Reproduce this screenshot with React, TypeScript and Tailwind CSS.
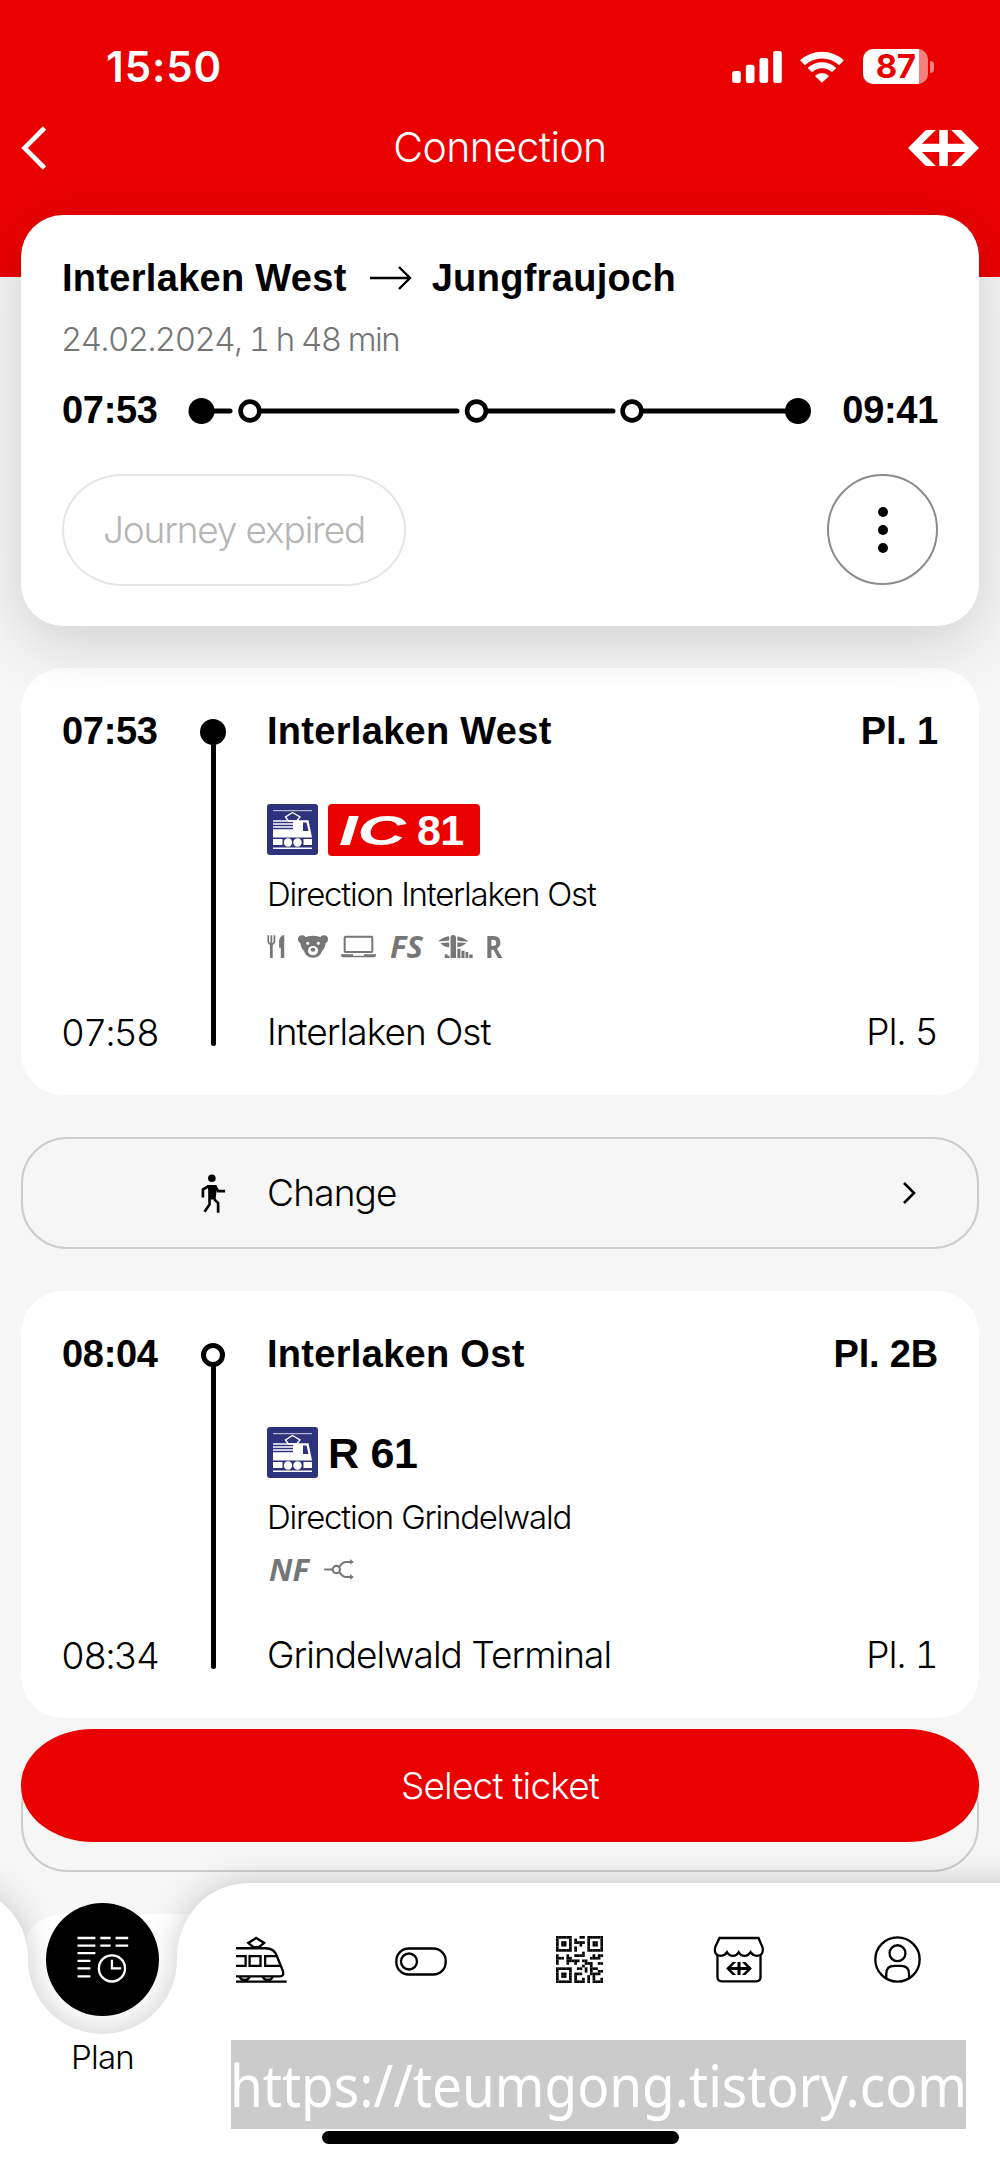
import type { ReactNode } from "react";

const light = "font-['Inter',sans-serif] font-light";
const bold = "font-['Liberation_Sans',Arial,sans-serif] font-bold";

const qrRows = [
  "######...##.######",
  "#....#.#....#....#",
  "#.##.#.####.#.##.#",
  "#.##.#...#..#.##.#",
  "#....#.#....#....#",
  "######.#....######",
  "..........#.......",
  "#...#..####...#.##",
  "###.##.......####.",
  "#...#####.##......",
  "#...#..#...###..##",
  "..........#..#....",
  "######..##.#.###..",
  "#....#.....#.#..##",
  "#.##.#.###...####.",
  "#.##.#.#....#.#...",
  "#....#.#..#.#.#..#",
  "######.####.#.####",
];

function SbbLogo({ className }: { className?: string }) {
  return (
    <svg viewBox="0 0 214 108" className={className} fill="currentColor">
      <path d="M0 54 54 0H84L42 41H172L130 0H160L214 54 160 108H130L172 66H42L84 108H54Z" />
      <path d="M94 0H120V108H94Z" />
    </svg>
  );
}

function StatusBar() {
  return (
    <div className="flex h-[100px] items-end justify-between pr-[66px] pl-[106px] text-white">
      <span className="mb-[8px] font-['Inter',sans-serif] text-[42px] leading-[50px] font-semibold tracking-[0.9px]">
        15:50
      </span>
      <div className="mb-[16px] flex items-center">
        <svg viewBox="35 60 149 96" className="h-[32px] w-[50px]" fill="currentColor">
          <rect x="35" y="120" width="26" height="36" rx="7" />
          <rect x="76" y="101" width="26" height="55" rx="7" />
          <rect x="117" y="81" width="26" height="75" rx="7" />
          <rect x="158" y="60" width="26" height="96" rx="7" />
        </svg>
        <svg viewBox="240 59 130 98" className="ml-[18px] h-[33px] w-[44px]" fill="none" stroke="currentColor">
          <path d="M247 97A85 85 0 0 1 363 97" strokeWidth="20" />
          <path d="M269 119A51 51 0 0 1 341 119" strokeWidth="18" />
          <path d="M305 156 284 136A30 30 0 0 1 326 136Z" fill="currentColor" stroke="none" />
        </svg>
        <div className="ml-[19px] flex h-[35px] w-[65px] items-center justify-center rounded-[10px] bg-linear-to-r from-white from-86% to-[#f58080] to-86%">
          <span className="font-['Inter',sans-serif] text-[33px] leading-[35px] font-bold tracking-[-0.5px] text-[#eb0000]">
            87
          </span>
        </div>
        <div className="ml-[2px] h-[12px] w-[4px] rounded-r-full bg-[#f58080]" />
      </div>
    </div>
  );
}

function Header() {
  return (
    <header className="h-[277px] bg-[#eb0000]">
      <StatusBar />
      <div className="flex h-[95px] items-center justify-between px-[21px] text-white">
        <svg viewBox="0 0 26 44" className="h-[44px] w-[71px]" preserveAspectRatio="xMinYMid" fill="none" stroke="currentColor" strokeWidth="4.6">
          <path d="M23.5 2 3.5 22 23.5 42" />
        </svg>
        <h1 className={`${light} mb-[2px] text-[41px] leading-[50px] tracking-[-0.6px]`}>Connection</h1>
        <SbbLogo className="h-[36px] w-[71px]" />
      </div>
    </header>
  );
}

function RouteBar() {
  return (
    <svg viewBox="188 397 624 28" className="mt-[2px] h-[28px] w-[624px]" fill="none" stroke="black" strokeWidth="5" strokeLinecap="round">
      <path d="M214 411H230M262 411H457M488 411H613M644 411H790" />
      <g fill="black" stroke="none">
        <circle cx="201.5" cy="411" r="13" />
        <circle cx="798" cy="411" r="13" />
      </g>
      <g strokeWidth="4.6">
        <circle cx="250" cy="411" r="9.4" />
        <circle cx="476.5" cy="411" r="9.4" />
        <circle cx="632" cy="411" r="9.4" />
      </g>
    </svg>
  );
}

function SummaryCard() {
  return (
    <section className="relative z-10 -mt-[62px] h-[411px] rounded-[42px] bg-white px-[41px] pt-[41px] shadow-[0_14px_64px_rgba(0,0,0,0.17)]">
      <div className={`${bold} flex h-[44px] items-center text-[38px] leading-[44px] tracking-[0.3px]`}>
        <span>Interlaken West</span>
        <svg viewBox="0 0 42 26" className="mr-[20px] ml-[23px] h-[26px] w-[42px]" fill="none" stroke="black" strokeWidth="2.4">
          <path d="M0 13H40M29 2 40 13 29 24" />
        </svg>
        <span>Jungfraujoch</span>
      </div>
      <p className={`${light} -ml-[1px] mt-[19px] text-[33px] leading-[40px] tracking-[-1.55px] text-[#757575] tabular-nums`}>
        24.02.2024, 1 h 48 min
      </p>
      <div className={`${bold} mt-[29px] flex h-[44px] items-center justify-between text-[38px] leading-[44px] tracking-[-0.3px]`}>
        <span className="w-[96px]">07:53</span>
        <RouteBar />
        <span className="w-[96px] text-right">09:41</span>
      </div>
      <div className="mt-[42px] flex justify-between">
        <button className={`${light} h-[112px] w-[344px] rounded-[60px/56px] border-2 border-[#e5e5e5] text-[37px] tracking-[-1.15px] text-[#b5b5b5]`}>
          Journey expired
        </button>
        <button className="flex size-[111px] flex-col items-center justify-center gap-[8px] rounded-full border-2 border-[#8c8c8c]">
          <span className="size-[10px] rounded-full bg-black" />
          <span className="size-[10px] rounded-full bg-black" />
          <span className="size-[10px] rounded-full bg-black" />
        </button>
      </div>
    </section>
  );
}

function TrainPictogram() {
  return (
    <svg viewBox="0 0 51 51" className="size-[51px]">
      <rect width="51" height="51" rx="3" fill="#2d327d" />
      <g fill="none" stroke="white">
        <path d="M6 6.7H45" strokeWidth="0.8" />
        <path d="M6 44.3H45" strokeWidth="1.4" />
        <path d="M21 16.5 18.5 13 25.5 8.5 33 13 30 16.5M21 17H32" strokeWidth="1.4" />
        <path d="M6 17H26M6 20H26M6 23H26" strokeWidth="1.5" />
      </g>
      <path d="M6 25.2H26V16.3H41.5L45 33.5H6Z" fill="white" />
      <path d="M36 18.5H39.5L41.5 27H36Z" fill="#2d327d" />
      <path d="M6 35H45V41H6Z" fill="white" />
      <path d="M15.5 34.5H36.5V42H15.5Z" fill="#2d327d" />
      <circle cx="21" cy="38.5" r="4.2" fill="white" />
      <circle cx="30.5" cy="38.5" r="4.2" fill="white" />
    </svg>
  );
}

function RestaurantIcon() {
  return (
    <svg viewBox="84 437 52 67" className="h-[23px] w-[18px]" fill="none" stroke="#767676">
      <path d="M87.5 438V452Q87.5 463 96.5 464 105.5 463 105.5 452V438M96.5 438V462" strokeWidth="5" />
      <path d="M96.5 462V504" strokeWidth="8" />
      <path d="M134 437V504H124V474H119V455Q121 438 134 437Z" fill="#767676" stroke="none" />
    </svg>
  );
}

function BearIcon() {
  return (
    <svg viewBox="174 437 90 67" className="h-[23px] w-[30px]" fill="#767676">
      <circle cx="186" cy="449" r="12" />
      <circle cx="252" cy="449" r="12" />
      <path d="M192 444Q219 432 246 444L257 460Q254 478 246 484 240 504 219 504 198 504 192 484 184 478 181 460Z" />
      <g fill="white">
        <circle cx="203" cy="461" r="4.5" />
        <circle cx="235" cy="461" r="4.5" />
        <ellipse cx="219" cy="483" rx="15" ry="14" />
      </g>
      <ellipse cx="219" cy="480" rx="7" ry="6" />
    </svg>
  );
}

function LaptopIcon() {
  return (
    <svg viewBox="304 437 105 67" className="h-[23px] w-[35px]">
      <rect x="315" y="441" width="83" height="46" rx="3" fill="none" stroke="#767676" strokeWidth="6" />
      <path d="M304 494H340V498H373V494H409V497Q409 503 402 503H311Q304 503 304 497Z" fill="#767676" />
    </svg>
  );
}

function QuietIcon() {
  return (
    <svg viewBox="595 437 103 67" className="h-[23px] w-[35px]" fill="#767676">
      <path d="M595 455Q612 442 628 440V453Q612 456 595 455ZM652 440Q669 443 685 455 669 457 652 453ZM602 460Q615 459 628 459V473Q612 472 602 460ZM652 459Q666 459 679 460 668 470 652 473Z" />
      <path d="M632 443Q632 437 640 437 648 437 648 443V504H632ZM652 477H661V504H652ZM664 483H673V504H664ZM676 487H684V504H676ZM687 494H697V504H687ZM615 504V493H623V498H629V504Z" />
    </svg>
  );
}

function BranchIcon() {
  return (
    <svg viewBox="252 476 90 64" className="h-[21px] w-[30px]" fill="none" stroke="#767676" strokeWidth="6.5">
      <path d="M252 508H277M299 499Q308 485 318 485H334M299 517Q308 531 318 531H334" />
      <circle cx="289" cy="508" r="11" />
      <path d="M331 476 342 485 331 493ZM331 522 342 531 331 539Z" fill="#767676" stroke="none" />
    </svg>
  );
}

type LegProps = {
  departure: string;
  arrival: string;
  from: string;
  to: string;
  fromPlatform: string;
  toPlatform: string;
  direction: string;
  open?: boolean;
  train: ReactNode;
  services: ReactNode;
};

function LegCard(props: LegProps) {
  return (
    <section className="flex h-[427px] rounded-[42px] bg-white px-[41px] pt-[41px] pb-[40px] text-black">
      <div className="flex w-[136px] flex-col justify-between">
        <span className={`${bold} text-[38px] leading-[44px] tracking-[-0.3px]`}>{props.departure}</span>
        <span className={`${light} -ml-[1px] text-[37px] leading-[44px] tracking-[-1.7px] tabular-nums`}>{props.arrival}</span>
      </div>
      <div className="flex w-[30px] flex-col items-center pt-[10px] pb-[9px]">
        {props.open ? (
          <span className="my-[1px] size-[24px] rounded-full border-[5px] border-black" />
        ) : (
          <span className="size-[26px] rounded-full bg-black" />
        )}
        <span className="-mt-[2px] w-[5px] flex-1 rounded-b-full bg-black" />
      </div>
      <div className="ml-[39px] flex-1">
        <div className={`${bold} flex justify-between text-[38px] leading-[44px] tracking-[0.3px]`}>
          <span>{props.from}</span>
          <span className="tracking-[-0.2px]">{props.fromPlatform}</span>
        </div>
        <div className="mt-[51px] flex h-[51px] items-center gap-[10px]">
          <TrainPictogram />
          {props.train}
        </div>
        <p className={`${light} mt-[19px] text-[33px] leading-[40px] tracking-[-1.2px]`}>{props.direction}</p>
        <div className="mt-[20px] flex h-[24px] items-center text-[#767676]">{props.services}</div>
        <div className={`${light} mt-[52px] flex justify-between text-[37px] leading-[44px] tracking-[-0.95px]`}>
          <span>{props.to}</span>
          <span className="tracking-[-0.8px] tabular-nums">{props.toPlatform}</span>
        </div>
      </div>
    </section>
  );
}

function WalkIcon() {
  return (
    <svg viewBox="62 66 74 118" className="h-[39px] w-[25px]" fill="none" stroke="black" strokeWidth="8">
      <circle cx="94" cy="79" r="11.5" fill="black" stroke="none" />
      <path d="M80 99H108V120L105 143H83V116Z" fill="black" stroke="none" />
      <path d="M84 103 67 113V137M104 102 113 118H134M87 142V158L72 180M101 142 113 154V183" />
    </svg>
  );
}

function ChangeRow({ label }: { label: string }) {
  return (
    <button className="flex h-[112px] w-full items-center rounded-[46px] border-2 border-[#cdcdcd] pr-[61px] pl-[178px]">
      <WalkIcon />
      <span className={`${light} ml-[41px] text-[37px] leading-[44px] tracking-[-0.8px]`}>{label}</span>
      <svg viewBox="0 0 14 22" className="ml-auto h-[22px] w-[14px]" fill="none" stroke="black" strokeWidth="2.6">
        <path d="M2 1 12 11 2 21" />
      </svg>
    </button>
  );
}

function PlanIcon() {
  return (
    <svg viewBox="230 228 156 142" className="h-[47px] w-[52px]" fill="none" stroke="white" strokeWidth="7">
      <path d="M231 234H285M300 234H331M346 234H384M231 257H285M300 257H331M346 257H384M231 280H285M231 303H270M231 326H270M231 350H270" />
      <circle cx="335" cy="326" r="39.5" />
      <path d="M335 300V326H363" />
    </svg>
  );
}

function TrainIcon() {
  return (
    <svg viewBox="708 228 154 142" className="h-[47px] w-[51px]" fill="none" stroke="black" strokeWidth="7">
      <path d="M769 234 793 249 777 262H761L745 249Z" />
      <path d="M708 265H797Q824 265 832 290L850 335Q853 350 841 350H708" />
      <path d="M708 289H737V318H708M749 289H782V318H749ZM834 289H796V318H845" />
      <path d="M719 351Q722 361 734 361 746 361 749 351M789 351Q792 361 804 361 816 361 819 351M708 366H861" />
    </svg>
  );
}

function SwipeIcon() {
  return (
    <svg viewBox="1185 260 156 86" className="h-[29px] w-[52px]" fill="none" stroke="black" strokeWidth="7">
      <rect x="1189" y="264" width="148" height="78" rx="37" />
      <circle cx="1227" cy="303" r="24" />
    </svg>
  );
}

function QrIcon() {
  return (
    <svg viewBox="0 0 18 18" className="size-[47px]">
      {qrRows.map((row, y) =>
        row.split("").map((cell, x) =>
          cell === "#" ? <rect key={`${x}-${y}`} x={x} y={y} width="1.03" height="1.03" /> : null
        )
      )}
    </svg>
  );
}

function ShopIcon() {
  return (
    <div className="relative h-[47px] w-[52px]">
      <svg viewBox="698 108 156 142" className="size-full" fill="none" stroke="black" strokeWidth="7">
        <path d="M717 114H835L847 142Q852 167 830 168 817 167 811 157 804 168 793 168 781 168 775 157 769 168 758 168 746 168 740 157 734 167 721 168 699 167 704 142Z" />
        <path d="M711 166V232Q711 245 724 245H828Q841 245 841 232V166" />
      </svg>
      <SbbLogo className="absolute top-[26px] left-[13px] h-[13px] w-[26px]" />
    </div>
  );
}

function ProfileIcon() {
  return (
    <svg viewBox="1181 108 142 142" className="size-[47px]" fill="none" stroke="black" strokeWidth="7">
      <circle cx="1252" cy="179" r="67" />
      <circle cx="1252" cy="160" r="24" />
      <path d="M1218 237V223Q1218 198 1242 198H1262Q1287 198 1287 223V237" />
    </svg>
  );
}

function TabBar() {
  return (
    <nav className="absolute inset-x-0 bottom-0 z-20 h-[281px]">
      <svg viewBox="0 0 1000 281" className="absolute inset-0 overflow-visible drop-shadow-[0_0_16px_rgba(0,0,0,0.2)]">
        <path d="M-60 0Q-20 0 0 18C17 32 28 50 28 76.5A74.5 74.5 0 0 0 177 76.5C177 36 205 0 250 0H1060V340H-60Z" fill="white" />
      </svg>
      <div className="relative grid grid-cols-6 px-[23px] pt-[20px]">
        <div className="flex flex-col items-center">
          <span className="flex size-[113px] items-center justify-center rounded-full bg-black">
            <PlanIcon />
          </span>
          <span className={`${light} mt-[21px] text-[33px] leading-[40px] tracking-[-0.8px]`}>Plan</span>
        </div>
        <div className="flex h-[113px] items-center justify-center"><TrainIcon /></div>
        <div className="flex h-[113px] items-center justify-center pt-[3px]"><SwipeIcon /></div>
        <div className="flex h-[113px] items-center justify-center"><QrIcon /></div>
        <div className="flex h-[113px] items-center justify-center"><ShopIcon /></div>
        <div className="flex h-[113px] items-center justify-center"><ProfileIcon /></div>
      </div>
      <div className="absolute top-[157px] left-[231px] flex h-[89px] w-[735px] items-center justify-center bg-[#cbcbcb]">
        <span className="scale-x-[0.9] font-['Noto_Sans',sans-serif] text-[59px] leading-[89px] whitespace-nowrap text-white">
          https://teumgong.tistory.com
        </span>
      </div>
      <div className="absolute bottom-[20px] left-[322px] h-[13px] w-[357px] rounded-full bg-black" />
    </nav>
  );
}

export default function App() {
  return (
    <div className="relative h-[2164px] w-[1000px] overflow-hidden bg-[#f6f6f6]">
      <Header />
      <main className="flex flex-col gap-[42px] px-[21px]">
        <SummaryCard />
        <LegCard
          departure="07:53"
          arrival="07:58"
          from="Interlaken West"
          to="Interlaken Ost"
          fromPlatform="Pl. 1"
          toPlatform="Pl. 5"
          direction="Direction Interlaken Ost"
          train={
            <span className={`${bold} flex h-[52px] w-[152px] items-center rounded-[4px] bg-[#eb0000] pl-[11px] text-[43px] leading-[52px] text-white`}>
              <span className="w-[78px] origin-left scale-x-155 italic">IC</span>
              <span className="tracking-[-0.6px]">81</span>
            </span>
          }
          services={
            <>
              <RestaurantIcon />
              <span className="ml-[13px] flex"><BearIcon /></span>
              <span className="ml-[13px] flex"><LaptopIcon /></span>
              <span className="ml-[14px] w-[36px] font-['Open_Sans',sans-serif] text-[31px] leading-[24px] font-bold italic">FS</span>
              <span className="ml-[12px] flex"><QuietIcon /></span>
              <span className="ml-[12px] origin-left scale-x-85 font-['Open_Sans',sans-serif] text-[31px] leading-[24px] font-bold">R</span>
            </>
          }
        />
        <ChangeRow label="Change" />
        <LegCard
          open
          departure="08:04"
          arrival="08:34"
          from="Interlaken Ost"
          to="Grindelwald Terminal"
          fromPlatform="Pl. 2B"
          toPlatform="Pl. 1"
          direction="Direction Grindelwald"
          train={<span className={`${bold} text-[43px] leading-[52px] tracking-[-0.3px]`}>R 61</span>}
          services={
            <>
              <span className="ml-[2px] w-[42px] font-['Open_Sans',sans-serif] text-[31px] leading-[24px] font-bold italic">NF</span>
              <span className="ml-[13px] flex"><BranchIcon /></span>
            </>
          }
        />
        <ChangeRow label="Change" />
        <div className="h-[427px] shrink-0 rounded-[42px] bg-white" />
      </main>
      <button className={`${light} absolute top-[1729px] left-[21px] z-10 h-[113px] w-[958px] rounded-[72px/56px] bg-[#eb0000] text-[37px] tracking-[-0.8px] text-white`}>
        Select ticket
      </button>
      <TabBar />
    </div>
  );
}
